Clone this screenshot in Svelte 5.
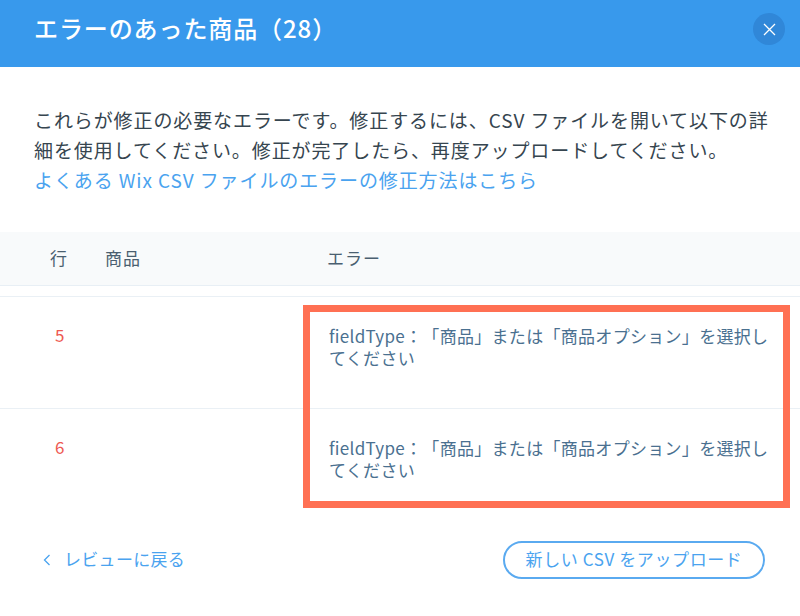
<script lang="ts">
	const rows = [
		{ line: 5, error: 'fieldType：「商品」または「商品オプション」を選択してください' },
		{ line: 6, error: 'fieldType：「商品」または「商品オプション」を選択してください' }
	];
</script>

<div class="modal">
	<header class="modal-head">
		<h1>エラーのあった商品（28）</h1>
		<button class="close" aria-label="閉じる">
			<svg viewBox="0 0 13 13" width="13" height="13">
				<path d="M1 1 L12 12 M12 1 L1 12" stroke="#fff" stroke-width="1.3" fill="none" />
			</svg>
		</button>
	</header>

	<div class="intro">
		<p>これらが修正の必要なエラーです。修正するには、CSV ファイルを開いて以下の詳細を使用してください。修正が完了したら、再度アップロードしてください。</p>
		<a href="#help">よくある Wix CSV ファイルのエラーの修正方法はこちら</a>
	</div>

	<div class="table-head">
		<span>行</span>
		<span>商品</span>
		<span>エラー</span>
	</div>

	<div class="rows">
		{#each rows as row}
			<div class="row">
				<span class="line">{row.line}</span>
				<span></span>
				<span class="err">{row.error}</span>
			</div>
		{/each}
	</div>

	<footer class="modal-foot">
		<a class="back" href="#review">
			<svg viewBox="0 0 8 12" width="8" height="12">
				<path d="M6.5 1 L1.5 6 L6.5 11" stroke="#4aa3ef" stroke-width="1.3" fill="none" />
			</svg>
			<span>レビューに戻る</span>
		</a>
		<button class="upload"><span>新しい CSV をアップロード</span></button>
	</footer>

	<div class="highlight"></div>
</div>

<style>
	:global(body) {
		margin: 0;
		background: #fff;
	}

	.modal {
		position: relative;
		width: 800px;
		height: 616px;
		overflow: hidden;
		font-family: "Noto Sans CJK JP", "Noto Sans", sans-serif;
		color: #4a7090;
		text-spacing-trim: space-all;
	}

	.modal-head {
		height: 67px;
		background: #3899ec;
		display: flex;
		justify-content: space-between;
		align-items: flex-start;
		padding: 0 15px 0 34px;
		box-sizing: border-box;
	}

	.modal-head h1 {
		margin: 9px 0 0;
		font-size: 24px;
		line-height: 38px;
		font-weight: 500;
		letter-spacing: 0.9px;
		color: #fff;
	}

	.close {
		margin-top: 13px;
		width: 32px;
		height: 32px;
		padding: 0;
		border: 0;
		border-radius: 50%;
		background: #3087d8;
		display: flex;
		align-items: center;
		justify-content: center;
	}

	.intro {
		padding: 38px 24px 0 34px;
		height: 165px;
		box-sizing: border-box;
		font-size: 19px;
		line-height: 30px;
		letter-spacing: 0.9px;
	}

	.intro p {
		margin: 0;
		color: #36454f;
	}

	.intro a {
		color: #4aa3ef;
		text-decoration: none;
	}

	.table-head {
		display: grid;
		grid-template-columns: 55px 222px 1fr;
		padding: 0 0 3px 50px;
		height: 54px;
		box-sizing: border-box;
		align-items: center;
		background: #f8fafb;
		border-bottom: 1px solid #e8eff5;
		font-size: 17px;
		letter-spacing: 1px;
		color: #4a5f70;
	}

	.rows {
		margin-top: 10px;
	}

	.row {
		display: grid;
		grid-template-columns: 50px 229px 1fr;
		padding-left: 50px;
		height: 112px;
		box-sizing: border-box;
		border-top: 1px solid #eaf0f5;
		padding-top: 28px;
		font-size: 17px;
		line-height: 22px;
		letter-spacing: 0.3px;
	}

	.line {
		color: #ee5951;
		padding-left: 5px;
		margin-top: -1px;
	}

	.err {
		padding-right: 24px;
	}

	.modal-foot {
		position: absolute;
		left: 43px;
		right: 35px;
		bottom: 37px;
		display: flex;
		justify-content: space-between;
		align-items: center;
	}

	.back {
		display: flex;
		align-items: center;
		gap: 13px;
		font-size: 17px;
		letter-spacing: 0.3px;
		color: #4aa3ef;
		text-decoration: none;
	}

	.back span,
	.upload span {
		position: relative;
		top: -2px;
	}

	.upload {
		width: 262px;
		height: 38px;
		padding: 0;
		border: 2px solid #5aaaf0;
		border-radius: 19px;
		background: #fff;
		font: inherit;
		font-size: 17px;
		letter-spacing: 0.6px;
		color: #4aa3ef;
	}

	.highlight {
		position: absolute;
		left: 303px;
		top: 305px;
		width: 487px;
		height: 203px;
		box-sizing: border-box;
		border: 7px solid #ff7053;
	}
</style>
